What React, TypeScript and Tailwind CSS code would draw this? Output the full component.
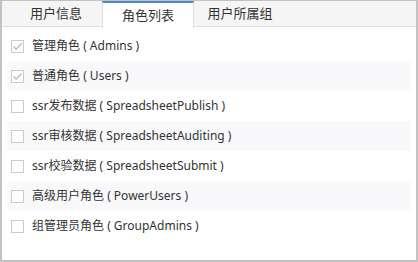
import React from 'react'

const TABS = ['用户信息', '角色列表', '用户所属组']

const ROLES = [
  { name: '管理角色', code: 'Admins', checked: true },
  { name: '普通角色', code: 'Users', checked: true },
  { name: 'ssr发布数据', code: 'SpreadsheetPublish', checked: false },
  { name: 'ssr审核数据', code: 'SpreadsheetAuditing', checked: false },
  { name: 'ssr校验数据', code: 'SpreadsheetSubmit', checked: false },
  { name: '高级用户角色', code: 'PowerUsers', checked: false },
  { name: '组管理员角色', code: 'GroupAdmins', checked: false },
]

function Box({ checked }: { checked: boolean }) {
  return (
    <span className="w-[13px] h-[13px] border border-[#cbcbcb] bg-white flex items-center justify-center shrink-0">
      {checked && (
        <svg width="11" height="11" viewBox="0 0 11 11" fill="none">
          <path d="M1.5 5.5 L4.2 8.2 L9.5 2.5" stroke="#b4b4b4" strokeWidth="1.2" />
        </svg>
      )}
    </span>
  )
}

export default function App() {
  return (
    <div
      className="w-[418px] h-[262px] bg-white border-t border-l-2 border-r-2 border-b-2 border-[#c2c2c2] flex flex-col text-[12px] text-[#333]"
      style={{ fontFamily: '"Noto Sans", "Noto Sans CJK SC", sans-serif' }}
    >
      {/* tabs */}
      <div className="h-[26px] bg-[#f5f5f5] border-b border-[#dedede] flex pl-[8px] shrink-0">
        {TABS.map((t, i) => (
          <div
            key={t}
            className={
              i === 1
                ? 'w-[92px] h-[27px] bg-white border-t-2 border-x border-t-[#4a86c8] border-x-[#dcdcdc] flex items-center justify-center text-[13px]'
                : 'w-[92px] h-[26px] flex items-center justify-center text-[13px]'
            }
          >
            {t}
          </div>
        ))}
      </div>

      {/* role list */}
      <div className="pt-[4px] px-[5px]">
        {ROLES.map((r, i) => (
          <div
            key={r.code}
            className={`h-[30px] flex items-center gap-[8px] pl-[4px] ${i % 2 === 1 ? 'bg-[#f9f9fb]' : ''}`}
          >
            <Box checked={r.checked} />
            <span className="leading-none whitespace-pre">
              {r.name} ( {r.code} )
            </span>
          </div>
        ))}
      </div>
    </div>
  )
}
